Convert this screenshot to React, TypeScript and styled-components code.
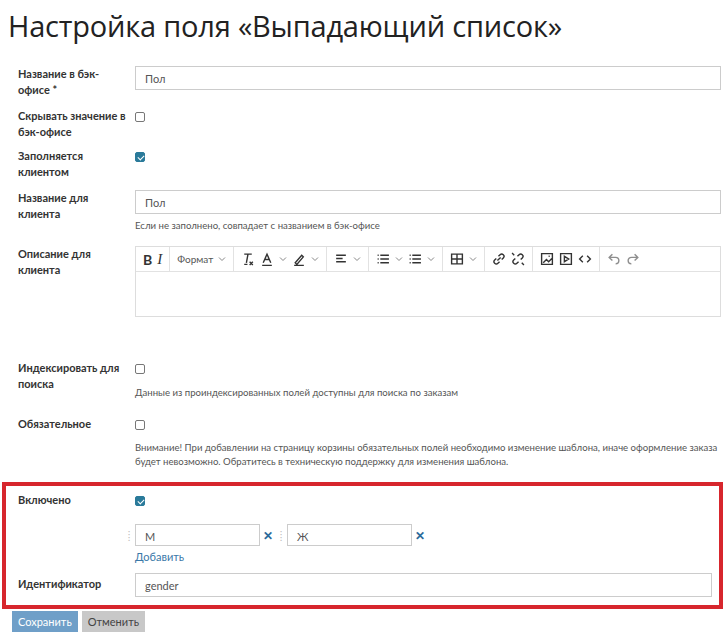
import React from "react";
import styled, { createGlobalStyle } from "styled-components";

const G = createGlobalStyle`
  body { margin: 0; font-family: Lato, "Open Sans", sans-serif; color: #222; background: #fff; }
  * { box-sizing: border-box; }
`;
const Page = styled.div` padding: 6px 6px 0 8px; width: 727px; `;
const Title = styled.h1` font-family: "Open Sans", sans-serif; font-weight: 400; font-size: 29px; margin: 0 0 20px 0; color: #222; letter-spacing: -0.2px; line-height: 40px; `;
const Row = styled.div<{ mt?: number; h?: number }>`
  display: grid; grid-template-columns: 117px 1fr; padding: 0 0 0 10px;
  margin-top: ${p => p.mt ?? 0}px; min-height: ${p => p.h ?? 0}px;
`;
const Label = styled.div` font-size: 11px; font-weight: 700; line-height: 16px; color: #333; `;
const Field = styled.div` display: flex; flex-direction: column; `;
const Input = styled.div<{ w?: number }>`
  height: 24px; border: 1px solid #ccc; font-size: 11px; color: #555; padding: 5px 9px;
  width: ${p => (p.w ? p.w + "px" : "100%")}; background: #fff;
`;
const Hint = styled.div` font-size: 9.6px; color: #555; margin-top: 5px; line-height: 14px; `;
const Check = styled.span<{ on?: boolean }>`
  display: inline-block; width: 10px; height: 10px; border-radius: 2px; margin-top: 4px;
  border: 1px solid ${p => (p.on ? "#2a7a9a" : "#777")}; background: ${p => (p.on ? "#2a7a9a" : "#fff")};
  position: relative;
  &::after { content: ${p => (p.on ? "''" : "none")}; position: absolute; left: 2.5px; top: 0.5px; width: 3px; height: 5px;
    border: solid #fff; border-width: 0 1.5px 1.5px 0; transform: rotate(45deg); }
`;
const Editor = styled.div` border: 1px solid #ddd; height: 71px; `;
const Toolbar = styled.div` height: 25px; border-bottom: 1px solid #e2e2e2; display: flex; align-items: center; font-size: 11px; color: #333; `;
const Grp = styled.div` display: flex; align-items: center; gap: 5px; padding: 0 7px; height: 100%; border-right: 1px solid #e2e2e2; `;
const Red = styled.div` margin: 13px 0 0 -6px; border: 4px solid #d7262d; width: 721px; padding: 6px 0 8px 2px; `;
const Opts = styled.div` display: flex; align-items: center; margin-left: -12px; `;
const Grip = styled.span` color: #bbb; font-size: 10px; width: 12px; text-align: center; `;
const X = styled.span` color: #2a6a9a; font-weight: 900; font-size: 12px; margin: 0 2px 0 3px; `;
const Link = styled.div` color: #3a78a8; font-size: 11px; margin-top: 4px; `;
const Btns = styled.div` display: flex; gap: 4px; padding-left: 4px; margin-top: 2px; `;
const Btn = styled.div<{ primary?: boolean }>`
  font-size: 11px; padding: 3px 6px; height: 21px; line-height: 15px;
  background: ${p => (p.primary ? "#6f9fc8" : "#c8c8c8")}; color: ${p => (p.primary ? "#fff" : "#444")};
`;
const Ch = () => <svg width="8" height="6" viewBox="0 0 8 6"><path d="M1 1.5l3 3 3-3" fill="none" stroke="#888" strokeWidth="1"/></svg>;
const I = ({ d }: { d: string }) => <svg width="14" height="14" viewBox="0 0 13 13"><path d={d} fill="none" stroke="#333" strokeWidth="1.3"/></svg>;

export default function App() {
  return (
    <Page>
      <G />
      <Title>Настройка поля «Выпадающий список»</Title>
      <Row h={42}><Label>Название в бэк-<br/>офисе *</Label><Field><Input>Пол</Input></Field></Row>
      <Row h={40}><Label>Скрывать значение в<br/>бэк-офисе</Label><Field><Check /></Field></Row>
      <Row h={42}><Label>Заполняется<br/>клиентом</Label><Field><Check on /></Field></Row>
      <Row h={56}><Label>Название для<br/>клиента</Label><Field><Input>Пол</Input><Hint>Если не заполнено, совпадает с названием в бэк-офисе</Hint></Field></Row>
      <Row h={114}><Label>Описание для<br/>клиента</Label><Field><Editor><Toolbar>
        <Grp><b style={{ fontSize: 14 }}>B</b><i style={{ fontFamily: "serif", fontSize: 15 }}>I</i></Grp>
        <Grp style={{ fontSize: 10, color: "#555" }}>Формат <Ch /></Grp>
        <Grp><I d="M3 2h7M6.5 2L5 10M3 11.5h3M8 9l3 3M11 9l-3 3" /><I d="M3 10L6.5 2 10 10M4.5 7h4M2 12.5h9" /><Ch /><I d="M3 10l6-7 1.5 1.5-6 7zM2 12.5h9" /><Ch /></Grp>
        <Grp><I d="M2 3h9M2 6h6M2 9h9" /><Ch /></Grp>
        <Grp><I d="M4 3h8M4 6.5h8M4 10h8M1.5 3h1M1.5 6.5h1M1.5 10h1" /><Ch /><I d="M4 3h8M4 6.5h8M4 10h8M1.5 3h1M1.5 6.5h1M1.5 10h1" /><Ch /></Grp>
        <Grp><I d="M1.5 2h10v9h-10zM1.5 6.5h10M6.5 2v9" /><Ch /></Grp>
        <Grp><I d="M5 8l3-3M4 6L2.5 7.5a2 2 0 003 3L7 9M9 7l1.5-1.5a2 2 0 00-3-3L6 4" /><I d="M4 6L2.5 7.5a2 2 0 003 3L7 9M9 7l1.5-1.5a2 2 0 00-3-3L6 4M10 10l2 2M1 1l2 2" /></Grp>
        <Grp><I d="M1.5 1.5h10v10h-10zM3 10l3-3 2 2 3-3M8 4h1" /><I d="M1.5 1.5h10v10h-10zM5 4v5l4-2.5z" /><I d="M4.5 3.5L1.5 6.5l3 3M8.5 3.5l3 3-3 3" /></Grp>
        <Grp style={{ borderRight: "none", opacity: 0.55 }}><I d="M5 2L2 5l3 3M2 5h6a3 3 0 010 6" /><I d="M8 2l3 3-3 3M11 5H5a3 3 0 000 6" /></Grp>
      </Toolbar></Editor></Field></Row>
      <Row h={56}><Label>Индексировать для<br/>поиска</Label><Field><Check /><Hint style={{ marginTop: 12 }}>Данные из проиндексированных полей доступны для поиска по заказам</Hint></Field></Row>
      <Row><Label>Обязательное</Label><Field><Check /><Hint style={{ marginTop: 11 }}>Внимание! При добавлении на страницу корзины обязательных полей необходимо изменение шаблона, иначе оформление заказа будет невозможно. Обратитесь в техническую поддержку для изменения шаблона.</Hint></Field></Row>
      <Red>
        <Row h={32}><Label>Включено</Label><Field><Check on /></Field></Row>
        <Row><Label /><Field>
          <Opts><Grip>⁞</Grip><Input w={125} style={{ height: 22 }}>М</Input><X>✕</X><Grip>⁞</Grip><Input w={125} style={{ height: 22 }}>Ж</Input><X>✕</X></Opts>
          <Link>Добавить</Link>
        </Field></Row>
        <Row mt={10}><Label style={{ paddingTop: 3 }}>Идентификатор</Label><Field><Input style={{ width: 577 }}>gender</Input></Field></Row>
      </Red>
      <Btns><Btn primary>Сохранить</Btn><Btn>Отменить</Btn></Btns>
    </Page>
  );
}
